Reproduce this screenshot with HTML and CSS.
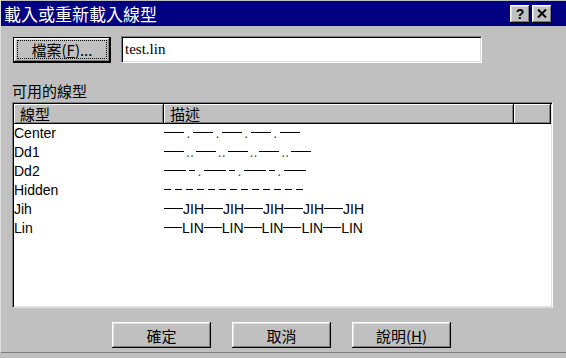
FILE: index.html
```html
<!doctype html>
<html lang="zh-Hant">
  <head>
    <meta charset="UTF-8" />
    <title>載入或重新載入線型</title>
    <link rel="stylesheet" href="styles.css">
  </head>
  <body>
    <div class="window">
      <!-- Title bar -->
      <div class="titlebar">
        <span class="title">載入或重新載入線型</span>
        <div class="caption-btns">
          <span class="cbtn help">?</span>
          <span class="cbtn close">
            <svg width="10" height="9" viewBox="0 0 10 9">
              <path d="M1 0.5 L9 8.5 M9 0.5 L1 8.5" stroke="#000" stroke-width="2" />
            </svg>
          </span>
        </div>
      </div>

      <!-- File row -->
      <div class="file-row">
        <div class="btn default"><span class="focus">檔案(<u>F</u>)...</span></div>
        <div class="field">test.lin</div>
      </div>

      <div class="label">可用的線型</div>

      <!-- Linetype list -->
      <div class="list">
        <div class="head">
          <div class="hc c1">線型</div>
          <div class="hc c2">描述</div>
          <div class="hc c3"></div>
        </div>
        <div class="row">
          <span class="name">Center</span>
          <span class="desc"><i class="ln w20"></i><b class="dt">.</b><i class="ln w20"></i><b class="dt">.</b><i class="ln w20"></i><b class="dt">.</b><i class="ln w20"></i><b class="dt">.</b><i class="ln w20"></i></span>
        </div>
        <div class="row">
          <span class="name">Dd1</span>
          <span class="desc"><i class="ln w20"></i><b class="dt2">..</b><i class="ln w20"></i><b class="dt2">..</b><i class="ln w20"></i><b class="dt2">..</b><i class="ln w20"></i><b class="dt2">..</b><i class="ln w20"></i></span>
        </div>
        <div class="row">
          <span class="name">Dd2</span>
          <span class="desc"><i class="ln w22"></i><i class="ln w6 sp"></i><b class="dt">.</b><i class="ln w22"></i><i class="ln w6 sp"></i><b class="dt">.</b><i class="ln w22"></i><i class="ln w6 sp"></i><b class="dt">.</b><i class="ln w22"></i></span>
        </div>
        <div class="row">
          <span class="name">Hidden</span>
          <span class="desc hidden"><i class="ln w7"></i><i class="ln w7"></i><i class="ln w7"></i><i class="ln w7"></i><i class="ln w7"></i><i class="ln w7"></i><i class="ln w7"></i><i class="ln w7"></i><i class="ln w7"></i><i class="ln w7"></i><i class="ln w7"></i><i class="ln w7"></i><i class="ln w7"></i></span>
        </div>
        <div class="row">
          <span class="name">Jih</span>
          <span class="desc"><i class="ln w19"></i>JIH<i class="ln w19"></i>JIH<i class="ln w19"></i>JIH<i class="ln w19"></i>JIH<i class="ln w19"></i>JIH</span>
        </div>
        <div class="row">
          <span class="name">Lin</span>
          <span class="desc"><i class="ln w18"></i>LIN<i class="ln w18"></i>LIN<i class="ln w18"></i>LIN<i class="ln w18"></i>LIN<i class="ln w18"></i>LIN</span>
        </div>
      </div>

      <!-- Dialog buttons -->
      <div class="actions">
        <div class="btn">確定</div>
        <div class="btn">取消</div>
        <div class="btn">說明(<u>H</u>)</div>
      </div>
    </div>
  </body>
</html>
```

FILE: styles.css
```css
* {
  margin: 0;
  padding: 0;
  box-sizing: border-box;
}

body {
  background: #c0c0c0;
  font-family: "Noto Sans CJK TC", sans-serif;
  overflow: hidden;
}

.window {
  width: 566px;
  height: 353px;
  border-bottom: 1px solid #808080;
  border-left: 1px solid #dfdfdf;
  padding-top: 1px;
}

.titlebar {
  height: 25px;
  background: #000080;
  display: flex;
  align-items: center;
  justify-content: space-between;
  padding: 0 14px 0 3px;
}

.title {
  color: white;
  font-size: 17px;
  line-height: 25px;
}

.caption-btns {
  display: flex;
  gap: 2px;
}

.cbtn {
  width: 20px;
  height: 18px;
  background: #c0c0c0;
  box-shadow: inset -1px -1px #000, inset 1px 1px #fff,
    inset -2px -2px #808080, inset 2px 2px #dfdfdf;
  display: flex;
  align-items: center;
  justify-content: center;
}

.cbtn.help {
  font-family: "Liberation Sans", sans-serif;
  font-weight: bold;
  font-size: 14px;
  line-height: 18px;
}

.btn {
  width: 99px;
  height: 26px;
  background: #c0c0c0;
  box-shadow: inset -1px -1px #000, inset 1px 1px #fff,
    inset -2px -2px #808080, inset 2px 2px #dfdfdf;
  display: flex;
  align-items: center;
  justify-content: center;
  font-size: 15px;
  color: #000;
}

.btn u {
  text-underline-offset: 1px;
}

.btn.default {
  width: 98px;
  border: 1px solid #000;
}

.focus {
  display: flex;
  align-items: center;
  justify-content: center;
  width: 88px;
  height: 17px;
  outline: 1px dotted #000;
}

.file-row {
  display: flex;
  align-items: center;
  padding-left: 12px;
  margin-top: 10px;
  height: 27px;
}

.field {
  margin-left: 10px;
  width: 361px;
  height: 27px;
  background: #fff;
  border-top: 1px solid #808080;
  border-left: 1px solid #808080;
  border-right: 1px solid #fff;
  border-bottom: 1px solid #fff;
  box-shadow: inset 1px 1px #000, inset -1px -1px #dfdfdf;
  font-family: "Liberation Serif", "DejaVu Serif", serif;
  font-size: 15px;
  line-height: 25px;
  padding-left: 3px;
}

.label {
  margin: 19px 0 0 11px;
  font-size: 15px;
  line-height: 18px;
}

.list {
  margin: 2px 0 0 11px;
  width: 541px;
  height: 206px;
  background: #fff;
  border-top: 1px solid #808080;
  border-left: 1px solid #808080;
  border-right: 1px solid #fff;
  border-bottom: 1px solid #dfdfdf;
  box-shadow: inset 1px 1px #000, inset -1px -1px #dfdfdf;
  padding: 1px 1px 0 1px;
}

.head {
  display: flex;
  height: 20px;
}

.hc {
  height: 20px;
  background: #c0c0c0;
  box-shadow: inset -1px -1px #000, inset 1px 1px #fff,
    inset -2px -2px #808080;
  font-size: 15px;
  line-height: 19px;
  padding-left: 6px;
}

.c1 {
  width: 150px;
}

.c2 {
  width: 350px;
}

.c3 {
  width: 37px;
}

.row {
  display: flex;
  height: 19px;
  font-family: "Liberation Sans", sans-serif;
  font-size: 14px;
  line-height: 19px;
}

.row:first-of-type {
  margin-top: 1px;
}

.name {
  width: 150px;
}

.desc {
  white-space: nowrap;
}

.ln {
  display: inline-block;
  height: 0;
  border-top: 1px solid #000;
  vertical-align: 5px;
}

.w22 {
  width: 22px;
}

.w20 {
  width: 20px;
}

.w19 {
  width: 19px;
}

.w18 {
  width: 18px;
}

.w7 {
  width: 7px;
}

.w6 {
  width: 6px;
}

.sp {
  margin-left: 3px;
}

.hidden .ln + .ln {
  margin-left: 4px;
}

.dt,
.dt2 {
  font-weight: normal;
  color: #444;
  margin: 0 2.5px;
}

.dt2 {
  margin: 0 2px;
}

.actions {
  display: flex;
  gap: 21px;
  padding-left: 111px;
  margin-top: 14px;
}
```
